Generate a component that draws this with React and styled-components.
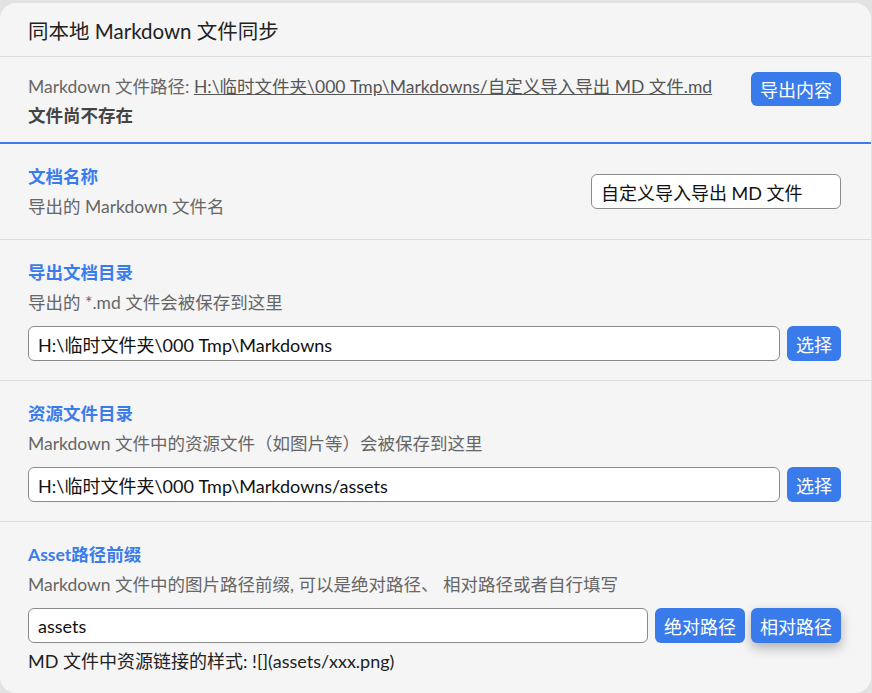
import React from 'react';
import styled, {createGlobalStyle} from 'styled-components';

const GlobalStyle = createGlobalStyle`
    html, body {
        margin: 0;
        padding: 0;
        background: #e2e2e2;
    }
    body {
        font-family: Lato, "Noto Sans CJK SC", sans-serif;
        overflow: hidden;
    }
`;

const Dialog = styled.div`
    box-sizing: border-box;
    width: 871px;
    height: 690px;
    margin-top: 3px;
    background-color: #f5f5f5;
    border-radius: 16px;
    overflow: hidden;
    display: flex;
    flex-direction: column;
`;

const Header = styled.div`
    height: 53px;
    padding: 0 28px;
    display: flex;
    align-items: center;
    font-size: 20.5px;
    color: #222;
    border-bottom: 1px solid #dcdcdc;
`;

const Info = styled.div`
    box-sizing: border-box;
    height: 87px;
    padding: 15px 30px 0 28px;
    display: flex;
    align-items: flex-start;
    justify-content: space-between;
    border-bottom: 2px solid #3b7cec;
`;

const InfoText = styled.div`
    display: flex;
    flex-direction: column;
    gap: 3px;
    margin-top: 2px;
    font-size: 17.5px;
    line-height: 26px;
    color: #666;
`;

const PathLink = styled.a`
    color: #555;
    text-decoration: underline;
`;

const Missing = styled.div`
    font-weight: bold;
    color: #444;
`;

const Section = styled.div`
    box-sizing: border-box;
    padding: 0 30px 0 28px;
    height: ${props => props.height}px;
    display: ${props => props.row ? 'flex' : 'block'};
    align-items: center;
    justify-content: space-between;
    border-bottom: ${props => props.last ? 'none' : '1px solid #dcdcdc'};
    padding-top: ${props => props.row ? 0 : 20}px;
`;

const Label = styled.div`
    font-size: 17.5px;
    font-weight: bold;
    color: #3b7cec;
    line-height: 26px;
`;

const Desc = styled.div`
    font-size: 17.5px;
    color: #666;
    line-height: 26px;
    margin-top: 4px;
`;

const InputRow = styled.div`
    display: flex;
    gap: 7px;
    margin-top: 10px;
`;

const Input = styled.input`
    box-sizing: border-box;
    height: 35px;
    width: ${props => props.width ? props.width + 'px' : 'auto'};
    flex: ${props => props.width ? 'none' : 1};
    min-width: 0;
    padding: 0 9px;
    border: 1px solid #8a8a8a;
    border-radius: 6px;
    background: #fff;
    font-family: inherit;
    font-size: 18px;
    color: #111;
    outline: none;
`;

const Button = styled.button`
    box-sizing: border-box;
    height: ${props => props.tall ? 35 : 34}px;
    padding: 0 9px;
    margin-left: ${props => props.tight ? -1 : 0}px;
    border: none;
    border-radius: 6px;
    background-color: #3a7bec;
    color: #fff;
    font-family: inherit;
    font-size: 18px;
    white-space: nowrap;
    box-shadow: ${props => props.raised ? '0 5px 12px rgba(0, 0, 0, 0.28)' : 'none'};
`;

const Note = styled.div`
    font-size: 18px;
    line-height: 24px;
    color: #222;
    margin-top: 6px;
`;

const PickRow = ({value}) => (
    <InputRow>
        <Input defaultValue={value} />
        <Button tall>选择</Button>
    </InputRow>
);

export default function App() {
    return (
        <>
            <GlobalStyle />
            <Dialog>
                <Header>同本地 Markdown 文件同步</Header>
                <Info>
                    <InfoText>
                        <span>
                            Markdown 文件路径: <PathLink>H:\临时文件夹\000 Tmp\Markdowns/自定义导入导出 MD 文件.md</PathLink>
                        </span>
                        <Missing>文件尚不存在</Missing>
                    </InfoText>
                    <Button>导出内容</Button>
                </Info>
                <Section row height={96}>
                    <div>
                        <Label>文档名称</Label>
                        <Desc>导出的 Markdown 文件名</Desc>
                    </div>
                    <Input width={250} defaultValue="自定义导入导出 MD 文件" />
                </Section>
                <Section height={141}>
                    <Label>导出文档目录</Label>
                    <Desc>导出的 *.md 文件会被保存到这里</Desc>
                    <PickRow value="H:\临时文件夹\000 Tmp\Markdowns" />
                </Section>
                <Section height={141}>
                    <Label>资源文件目录</Label>
                    <Desc>Markdown 文件中的资源文件（如图片等）会被保存到这里</Desc>
                    <PickRow value="H:\临时文件夹\000 Tmp\Markdowns/assets" />
                </Section>
                <Section last height={170}>
                    <Label>Asset路径前缀</Label>
                    <Desc>Markdown 文件中的图片路径前缀, 可以是绝对路径、 相对路径或者自行填写</Desc>
                    <InputRow>
                        <Input defaultValue="assets" />
                        <Button tall>绝对路径</Button>
                        <Button tall tight raised>相对路径</Button>
                    </InputRow>
                    <Note>MD 文件中资源链接的样式: ![](assets/xxx.png)</Note>
                </Section>
            </Dialog>
        </>
    );
}
